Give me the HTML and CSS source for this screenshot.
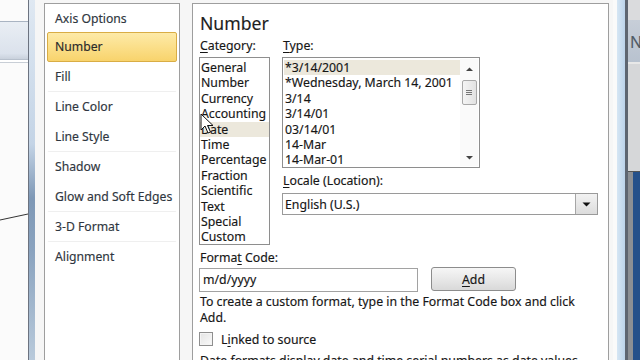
FILE: index.html
```html
<!DOCTYPE html>
<html>
<head>
<meta charset="utf-8">
<link rel="stylesheet" href="styles.css">
</head>
<body>
<div class="screen">
  <div class="bg-left">
    <div class="band"></div>
    <svg class="chart-line" width="28" height="20" viewBox="0 0 28 20"><line x1="0" y1="14" x2="28" y2="8" stroke="#333" stroke-width="1"/></svg>
  </div>
  <div class="frame-left"></div>
  <div class="dialog">
    <ul class="nav">
      <li class="nav-item first">Axis Options</li>
      <li class="nav-item active">Number</li>
      <li class="nav-item sep">Fill</li>
      <li class="nav-item">Line Color</li>
      <li class="nav-item sep">Line Style</li>
      <li class="nav-item">Shadow</li>
      <li class="nav-item sep">Glow and Soft Edges</li>
      <li class="nav-item sep">3-D Format</li>
      <li class="nav-item">Alignment</li>
    </ul>
    <div class="panel">
      <h1 class="title">Number</h1>
      <div class="cols">
        <div class="col-cat">
          <div class="label"><u>C</u>ategory:</div>
          <ul class="listbox cat">
            <li>General</li>
            <li>Number</li>
            <li>Currency</li>
            <li>Accounting</li>
            <li class="sel">Date</li>
            <li>Time</li>
            <li>Percentage</li>
            <li>Fraction</li>
            <li>Scientific</li>
            <li>Text</li>
            <li>Special</li>
            <li>Custom</li>
          </ul>
        </div>
        <div class="col-type">
          <div class="label"><u>T</u>ype:</div>
          <div class="listbox typebox">
            <ul class="type-items">
              <li class="sel">*3/14/2001</li>
              <li>*Wednesday, March 14, 2001</li>
              <li>3/14</li>
              <li>3/14/01</li>
              <li>03/14/01</li>
              <li>14-Mar</li>
              <li>14-Mar-01</li>
            </ul>
            <div class="scrollbar">
              <svg class="arrow up" width="9" height="6" viewBox="0 0 9 6"><path d="M1 5 L4.5 1.5 L8 5 Z" fill="#444"/></svg>
              <div class="thumb">
                <svg width="8" height="7" viewBox="0 0 8 7"><path d="M1 1.5H7M1 3.5H7M1 5.5H7" stroke="#777" stroke-width="1"/></svg>
              </div>
              <div class="track"></div>
              <svg class="arrow down" width="9" height="6" viewBox="0 0 9 6"><path d="M1 1 L4.5 4.5 L8 1 Z" fill="#444"/></svg>
            </div>
          </div>
          <div class="label locale-label"><u>L</u>ocale (Location):</div>
          <div class="combo">
            <span class="combo-text">English (U.S.)</span>
            <span class="combo-btn"><svg width="9" height="5" viewBox="0 0 9 5"><path d="M0.5 0.5 L8.5 0.5 L4.5 4.5 Z" fill="#111"/></svg></span>
          </div>
        </div>
      </div>
      <div class="label fc-label">Forma<u>t</u> Code:</div>
      <div class="fc-row">
        <div class="input">m/d/yyyy</div>
        <button class="btn"><u>A</u>dd</button>
      </div>
      <p class="hint">To create a custom format, type in the Format Code box and click Add.</p>
      <label class="check-row"><span class="checkbox"></span><span>L<u>i</u>nked to source</span></label>
      <p class="hint cut">Date formats display date and time serial numbers as date values.</p>
    </div>
  </div>
  <div class="frame-right"></div>
  <div class="bg-right">
    <div class="r-top"></div>
    <div class="r-band">N</div>
    <div class="r-mid"></div>
    <div class="r-blue"></div>
  </div>
  <svg class="cursor" width="14" height="22" viewBox="0 0 14 22"><path d="M1 1 L1 17 L5 13 L8 20 L10.5 19 L7.5 12.5 L13 12.5 Z" fill="#fff" stroke="#111" stroke-width="1" stroke-linejoin="round"/></svg>
</div>
</body>
</html>
```
FILE: styles.css
```css
* { box-sizing: border-box; }
html, body { margin: 0; padding: 0; }
body {
  width: 640px;
  height: 360px;
  overflow: hidden;
  background: #fff;
  font-family: "Noto Sans", "Open Sans", sans-serif;
  color: #161616;
  -webkit-text-stroke: 0.15px currentColor;
}
ul { list-style: none; margin: 0; padding: 0; }
p { margin: 0; }
u { text-decoration: underline; text-underline-offset: 2px; text-decoration-thickness: 1px; }

.screen {
  position: relative;
  display: flex;
  width: 640px;
  height: 360px;
  overflow: hidden;
}

.bg-left {
  position: relative;
  width: 28px;
  flex: none;
  background: #fbfbfb;
  padding-top: 21px;
}
.band {
  height: 39px;
  border-top: 1px solid #a9b4c2;
  background: linear-gradient(#e9eef4, #dbe2ec 85%, #c9d1dc);
  border-bottom: 1px solid #b7c0cc;
  box-shadow: 0 2px 0 #fff, 0 3px 0 #c8ced6;
}
.chart-line { display: block; margin-top: 146px; }

.frame-left {
  width: 7px;
  flex: none;
  border-left: 1px solid #6c7380;
  background: linear-gradient(#dfe8f2, #c4d4e6 40%, #7e98b6 55%, #8aa3bf 70%, #b9cadb 100%);
}

.dialog {
  flex: none;
  width: 578px;
  display: flex;
  background: #f6f6f6;
  padding: 3px 4px 0 9px;
  gap: 12px;
  font-size: 12px;
}

.nav {
  width: 136px;
  flex: none;
  height: 380px;
  background: #fff;
  border: 1px solid #9e9e9e;
  padding: 0 2px;
}
.nav-item {
  height: 30px;
  line-height: 28px;
  padding-left: 7px;
  color: #2f3640;
  font-size: 12.2px;
  border: 1px solid transparent;
  border-radius: 2px;
}
.nav-item.first { height: 28px; line-height: 28px; }
.nav-item.sep { border-bottom-color: #efefef; }
.nav-item.active {
  background: linear-gradient(#fdeaa8, #fbdf8a 50%, #f8d36c);
  border-color: #d9ad45;
  color: #2a2a2a;
}

.panel {
  flex: 1;
  height: 380px;
  background: #fff;
  border: 1px solid #9e9e9e;
  padding: 7px 0 0 6px;
}

.title {
  margin: 0 0 0 1px;
  font-size: 17.6px;
  font-weight: normal;
  line-height: 24px;
  height: 24px;
  color: #1e1e1e;
}

.label {
  font-size: 12.3px;
  line-height: 16px;
  height: 16px;
  margin-left: 1px;
}

.cols {
  display: flex;
  gap: 12px;
  margin-top: 3px;
}
.col-cat { width: 71px; flex: none; }
.col-type { width: 316px; flex: none; }

.listbox {
  margin-top: 3px;
  border: 1px solid #8e8e8e;
  background: #fff;
  font-size: 12.3px;
}
.listbox li {
  height: 15.4px;
  line-height: 15.4px;
  padding-left: 1px;
  white-space: nowrap;
}
.listbox li.sel { background: #ece8dc; }
.cat { height: 188px; padding-top: 2px; }

.typebox {
  width: 198px;
  height: 111px;
  display: flex;
  padding: 1px;
}
.type-items { flex: 1; padding-top: 1px; }
.type-items li { padding-left: 1px; }
.scrollbar {
  width: 18px;
  flex: none;
  display: flex;
  flex-direction: column;
  align-items: center;
  background: #fafafa;
}
.scrollbar .arrow.up { margin: 7px 0 8px; }
.scrollbar .arrow.down { margin: 0 0 5px; }
.thumb {
  width: 15px;
  height: 25px;
  border: 1px solid #a8a8a8;
  border-radius: 2px;
  background: linear-gradient(90deg, #f4f4f4, #e2e2e2);
  display: flex;
  align-items: center;
  justify-content: center;
}
.track { flex: 1; }

.locale-label { margin-top: 5px; }
.combo {
  margin-top: 4px;
  height: 22px;
  border: 1px solid #9a9a9a;
  display: flex;
  align-items: center;
  background: #fff;
}
.combo-text { flex: 1; padding-left: 2px; font-size: 12.3px; }
.combo-btn {
  width: 22px;
  height: 20px;
  border-left: 1px solid #a6a6a6;
  background: linear-gradient(#f2f2f2, #dcdcdc);
  display: flex;
  align-items: center;
  justify-content: center;
}

.fc-label { margin-top: 5px; }
.fc-row {
  display: flex;
  align-items: center;
  gap: 13px;
  margin-top: 1px;
  height: 25px;
}
.input {
  width: 219px;
  height: 24px;
  border: 1px solid #a2a2a2;
  line-height: 22px;
  padding-left: 3px;
  font-size: 12.3px;
}
.btn {
  width: 85px;
  height: 24px;
  margin-top: -1px;
  border: 1px solid #8c8c8c;
  border-radius: 3px;
  background: linear-gradient(#f6f6f6, #e8e8e8 50%, #d9d9d9);
  font-family: inherit;
  font-size: 12.3px;
  color: #161616;
  padding: 0;
  -webkit-text-stroke: 0.15px currentColor;
}

.hint {
  font-size: 12.3px;
  line-height: 16px;
  margin-top: 2px;
  margin-left: 1px;
  width: 390px;
}
.check-row {
  display: flex;
  align-items: center;
  gap: 8px;
  height: 16px;
  margin-top: 5px;
  font-size: 12.3px;
}
.checkbox {
  width: 14px;
  height: 14px;
  border: 1px solid #8f8f8f;
  background: linear-gradient(135deg, #e4e4e4, #fafafa);
  box-shadow: inset 0 0 0 1px #f4f4f4;
}
.hint.cut { margin-top: 6px; }

.frame-right {
  width: 12px;
  flex: none;
  border-left: 4px solid #fafafa;
  background: linear-gradient(90deg, #d6e6f4, #bcd3ea);
}

.bg-right {
  flex: 1;
  display: flex;
  flex-direction: column;
  border-left: 3px solid #5e6570;
  background: #a6a8ac;
}
.r-top { height: 20px; background: #dadbdd; }
.r-band {
  height: 44px;
  background: linear-gradient(#c7ced8, #b8c2cf);
  border-bottom: 2px solid #e8e8e8;
  font-size: 16px;
  line-height: 44px;
  color: #505a66;
  padding-left: 2px;
}
.r-mid { height: 108px; background: #d6d7d9; border-bottom: 1px solid #555; }
.r-blue { flex: 1; background: #25508a; border-left: 5px solid #8c8f94; }

.cursor { position: absolute; left: 200px; top: 113px; }
```
